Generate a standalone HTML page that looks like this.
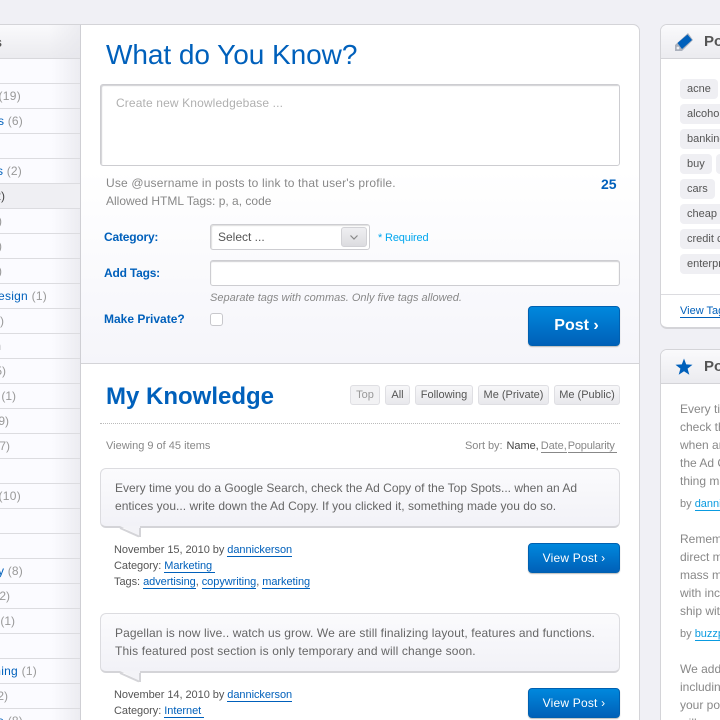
<!DOCTYPE html>
<html><head><meta charset="utf-8"><style>
html,body{margin:0;padding:0;width:720px;height:720px;overflow:hidden;background:#f0f0f5;font-family:"Liberation Sans",sans-serif}
#r{position:relative;width:720px;height:720px;overflow:hidden}
.b{position:absolute;box-sizing:border-box}
.t{position:absolute;white-space:nowrap;font-size:12px;line-height:16px;letter-spacing:0;color:#666}
a,.l{color:#0060bb;text-decoration:none;border-bottom:1px solid #0060bb}
.g{color:#999}.n{color:#0060bb}
.line{position:absolute;left:0;width:80px;height:1px;background:#dcdce0}
.tab{position:absolute;top:385px;height:20px;box-sizing:border-box;border:1px solid #dfdfe3;border-radius:3px;background:linear-gradient(#f7f7f9,#e8e8ec);font-size:11px;line-height:18px;text-align:center;color:#555;letter-spacing:0}
.tag{position:absolute;left:680px;height:20px;background:#efeff3;border-radius:4px;font-size:11px;line-height:21px;padding:0 7px;color:#555;letter-spacing:0;white-space:nowrap}
.bub{position:absolute;left:100px;width:520px;height:60px;box-sizing:border-box;border:1px solid #dcdce0;border-bottom:2px solid #d4d4d8;border-radius:6px;background:linear-gradient(#fbfbfd,#f2f2f7)}
.btn{position:absolute;left:528px;width:92px;box-sizing:border-box;border:1px solid #0060b0;border-radius:4px;background:linear-gradient(#0088dd,#0060b8);color:#fff;text-align:center;box-shadow:0 1px 1px #bbb}
</style></head><body><div id="r">

<!-- left sidebar -->
<div class="b" style="left:0;top:24px;width:81px;height:696px;background:linear-gradient(90deg,#fbfbff 0,#fbfbff 65%,#ecECf1 100%);border-top:1px solid #d4d4d8;border-right:1px solid #cfcfd4"></div>
<div class="b" style="left:0;top:25px;width:80px;height:34px;background:linear-gradient(90deg,rgba(255,255,255,0) 60%,rgba(228,228,234,.6)),linear-gradient(#fafafc,#ebebef);border-bottom:1px solid #d8d8dc"></div>
<div class="b" style="left:0;top:184px;width:80px;height:24px;background:#efeff3"></div>
<div class="line" style="top:83px"></div><div class="line" style="top:108px"></div><div class="line" style="top:133px"></div><div class="line" style="top:158px"></div><div class="line" style="top:183px"></div><div class="line" style="top:208px"></div><div class="line" style="top:233px"></div><div class="line" style="top:258px"></div><div class="line" style="top:283px"></div><div class="line" style="top:308px"></div><div class="line" style="top:333px"></div><div class="line" style="top:358px"></div><div class="line" style="top:383px"></div><div class="line" style="top:408px"></div><div class="line" style="top:433px"></div><div class="line" style="top:458px"></div><div class="line" style="top:483px"></div><div class="line" style="top:508px"></div><div class="line" style="top:533px"></div><div class="line" style="top:558px"></div><div class="line" style="top:583px"></div><div class="line" style="top:608px"></div><div class="line" style="top:633px"></div><div class="line" style="top:658px"></div><div class="line" style="top:683px"></div><div class="line" style="top:708px"></div>
<div class="t" style="right:720px;margin-right:-2px;top:34px;color:#555;font-weight:bold;font-size:14px">s</div>
<div class="t g" style="right:699px;top:88px;letter-spacing:.3px">(19)</div>
<div class="t" style="right:697px;top:113px;letter-spacing:.2px"><span class="n">s</span> <span class="g">(6)</span></div>
<div class="t" style="right:698px;top:163px;letter-spacing:.2px"><span class="n">s</span> <span class="g">(2)</span></div>
<div class="t" style="right:715px;top:188px;color:#444">2)</div>
<div class="t g" style="right:718px;top:213px">)</div>
<div class="t g" style="right:718px;top:238px">)</div>
<div class="t g" style="right:718px;top:263px">)</div>
<div class="t" style="right:673px;top:288px;letter-spacing:.25px"><span class="n">esign</span> <span class="g">(1)</span></div>
<div class="t g" style="right:716px;top:313px">)</div>
<div class="t g" style="right:719px;top:338px">n</div>
<div class="t g" style="right:714px;top:363px">5)</div>
<div class="t g" style="right:704px;top:388px">(1)</div>
<div class="t g" style="right:711px;top:413px">9)</div>
<div class="t g" style="right:710px;top:438px">7)</div>
<div class="t g" style="right:699px;top:488px;letter-spacing:.3px">(10)</div>
<div class="t" style="right:697px;top:563px;letter-spacing:.2px"><span class="n">y</span> <span class="g">(8)</span></div>
<div class="t g" style="right:710px;top:588px">2)</div>
<div class="t g" style="right:705px;top:613px">(1)</div>
<div class="t" style="right:683px;top:663px;letter-spacing:.25px"><span class="n">ning</span> <span class="g">(1)</span></div>
<div class="t g" style="right:712px;top:688px">2)</div>
<div class="t" style="right:697px;top:713px;letter-spacing:.2px"><span class="n">e</span> <span class="g">(8)</span></div>

<!-- main -->
<div class="b" style="left:80px;top:24px;width:560px;height:696px;background:#fff;border:1px solid #d4d4d8;border-bottom:0;border-left:1px solid #cfcfd4;border-radius:0 7px 0 0"></div>
<div class="b" style="left:81px;top:170px;width:558px;height:194px;background:linear-gradient(#fff,#f5f5fa);border-bottom:1px solid #d4d4d8"></div>

<div class="t" style="left:106px;top:38px;font-size:28px;line-height:34px;letter-spacing:-.05px;color:#0060bb">What do You Know?</div>
<div class="b" style="left:100px;top:84px;width:520px;height:82px;border:1px solid #cdcdd1;border-radius:3px;background:#fff;box-shadow:inset 1px 1px 1px #d0d0d4"></div>
<div class="t" style="left:116px;top:95px;color:#b0b0b0;letter-spacing:.13px">Create new Knowledgebase ...</div>
<div class="t" style="left:106px;top:175px;color:#888;letter-spacing:.17px">Use @username in posts to link to that user's profile.</div>
<div class="t" style="left:106px;top:193px;color:#888">Allowed HTML Tags: p, a, code</div>
<div class="t" style="left:601px;top:176px;color:#0060bb;font-weight:bold;font-size:14px;letter-spacing:0">25</div>

<div class="t" style="left:104px;top:229px;color:#0060bb;font-weight:bold;letter-spacing:-.2px">Category:</div>
<div class="t" style="left:104px;top:265px;color:#0060bb;font-weight:bold;letter-spacing:-.2px">Add Tags:</div>
<div class="t" style="left:104px;top:311px;color:#0060bb;font-weight:bold;letter-spacing:0">Make Private?</div>

<div class="b" style="left:210px;top:224px;width:160px;height:26px;border:1px solid #cdcdd1;border-radius:3px;background:#fff;box-shadow:inset 1px 1px 1px #ddd"></div>
<div class="t" style="left:218px;top:229px;color:#555">Select ...</div>
<div class="b" style="left:341px;top:227px;width:26px;height:20px;border:1px solid #d2d2d6;border-radius:3px;background:linear-gradient(#efeff2,#dcdce0)"></div>
<svg class="b" style="left:349px;top:234px" width="10" height="7"><path d="M1.5 1.5 L5 5 L8.5 1.5" fill="none" stroke="#888" stroke-width="1.2"/></svg>
<div class="t" style="left:378px;top:230px;font-size:11px;color:#00a6ee;letter-spacing:-.15px">* Required</div>

<div class="b" style="left:210px;top:260px;width:410px;height:26px;border:1px solid #cdcdd1;border-radius:3px;background:#fff;box-shadow:inset 0 1px 1px #d0d0d4"></div>
<div class="t" style="left:210px;top:290px;font-size:11px;font-style:italic;color:#888">Separate tags with commas. Only five tags allowed.</div>
<div class="b" style="left:210px;top:313px;width:13px;height:13px;border:1px solid #c8c8cc;border-radius:3px;background:#fff"></div>

<div class="btn" style="top:306px;height:40px;padding-left:5px;font-size:16px;font-weight:bold;line-height:37px;letter-spacing:0">Post ›</div>

<div class="t" style="left:106px;top:382px;font-size:24px;line-height:30px;font-weight:bold;letter-spacing:0;color:#0060bb">My Knowledge</div>
<div class="tab" style="left:350px;width:30px;color:#999;background:#f2f2f4">Top</div>
<div class="tab" style="left:385px;width:25px">All</div>
<div class="tab" style="left:415px;width:58px">Following</div>
<div class="tab" style="left:478px;width:71px">Me (Private)</div>
<div class="tab" style="left:554px;width:66px">Me (Public)</div>
<div class="b" style="left:100px;top:423px;width:520px;height:1px;border-top:1px dotted #bbb"></div>
<div class="t" style="left:106px;top:438px;font-size:11px;color:#888">Viewing 9 of 45 items</div>
<div class="t" style="left:465px;top:438px;font-size:11px;color:#888;letter-spacing:-.05px">Sort by: <span style="color:#444;margin-left:1px">Name,</span> <span style="border-bottom:1px solid #888;margin-left:-1px">Date,</span> <span style="border-bottom:1px solid #888;margin-left:-2px;padding-right:2px;letter-spacing:-.2px">Popularity</span></div>

<!-- post 1 -->
<div class="bub" style="top:468px"></div>
<svg class="b" style="left:118px;top:525px" width="24" height="14"><path d="M2 1 H22 V11 Z" fill="#f3f3f7"/><path d="M2 3 L21 11.5" stroke="#d4d4d8" stroke-width="2" fill="none"/><path d="M22 12 V3" stroke="#d4d4d8" stroke-width="2" fill="none"/></svg>
<div class="t" style="left:115px;top:480px">Every time you do a Google Search, check the Ad Copy of the Top Spots... when an Ad</div>
<div class="t" style="left:115px;top:498px;letter-spacing:.03px">entices you... write down the Ad Copy. If you clicked it, something made you do so.</div>
<div class="t" style="left:114px;top:542px;font-size:11px;color:#555;letter-spacing:-.05px">November 15, 2010 by <a>dannickerson</a></div>
<div class="t" style="left:114px;top:558px;font-size:11px;color:#555;letter-spacing:-.05px">Category: <a>Marketing&nbsp;</a></div>
<div class="t" style="left:114px;top:574px;font-size:11px;color:#555;letter-spacing:-.05px">Tags: <a>advertising</a>, <a>copywriting</a>, <a>marketing</a></div>
<div class="btn" style="top:543px;height:30px;font-size:12px;line-height:28px;letter-spacing:.2px">View Post ›</div>

<!-- post 2 -->
<div class="bub" style="top:613px"></div>
<svg class="b" style="left:118px;top:670px" width="24" height="14"><path d="M2 1 H22 V11 Z" fill="#f3f3f7"/><path d="M2 3 L21 11.5" stroke="#d4d4d8" stroke-width="2" fill="none"/><path d="M22 12 V3" stroke="#d4d4d8" stroke-width="2" fill="none"/></svg>
<div class="t" style="left:115px;top:625px;letter-spacing:.1px">Pagellan is now live.. watch us grow. We are still finalizing layout, features and functions.</div>
<div class="t" style="left:115px;top:643px;letter-spacing:.15px">This featured post section is only temporary and will change soon.</div>
<div class="t" style="left:114px;top:687px;font-size:11px;color:#555;letter-spacing:-.05px">November 14, 2010 by <a>dannickerson</a></div>
<div class="t" style="left:114px;top:703px;font-size:11px;color:#555;letter-spacing:-.05px">Category: <a>Internet&nbsp;</a></div>
<div class="btn" style="top:688px;height:30px;font-size:12px;line-height:28px;letter-spacing:.2px">View Post ›</div>

<!-- right panel 1 -->
<div class="b" style="left:660px;top:24px;width:70px;height:305px;background:#fff;border:1px solid #d4d4d8;border-bottom:2px solid #d4d4d8;border-radius:7px"></div>
<div class="b" style="left:661px;top:25px;width:60px;height:34px;background:linear-gradient(#fafafc,#ebebef);border-bottom:1px solid #d4d4d8;border-radius:6px 0 0 0"></div>
<svg class="b" style="left:674px;top:32px" width="20" height="20"><path d="M1 13 L14 1 L19 8 L8 19 L1 19 Z" fill="#aab0bc"/><path d="M3.5 11 L13.5 2.5 L18 8 L8 17 Z" fill="#0060bb"/><circle cx="4" cy="16" r="1.4" fill="#eef0f4"/></svg>
<div class="t" style="left:704px;top:33px;font-size:15px;line-height:18px;font-weight:bold;color:#555;letter-spacing:0">Popular</div>
<div class="tag" style="top:79px">acne</div>
<div class="tag" style="top:104px">alcoholism</div>
<div class="tag" style="top:129px">banking</div>
<div class="tag" style="top:154px">buy</div>
<div class="tag" style="top:154px;left:716px">a</div>
<div class="tag" style="top:179px">cars</div>
<div class="tag" style="top:204px">cheap</div>
<div class="tag" style="top:229px">credit card</div>
<div class="tag" style="top:254px">enterprise</div>
<div class="b" style="left:661px;top:294px;width:60px;height:1px;background:#dcdce0"></div>
<div class="t" style="left:680px;top:303px;font-size:11px;color:#0060bb"><a>View Tags</a></div>

<!-- right panel 2 -->
<div class="b" style="left:660px;top:349px;width:70px;height:380px;background:#fff;border:1px solid #d4d4d8;border-radius:7px"></div>
<div class="b" style="left:661px;top:350px;width:60px;height:34px;background:linear-gradient(#fafafc,#ebebef);border-bottom:1px solid #d4d4d8;border-radius:6px 0 0 0"></div>
<svg class="b" style="left:675px;top:358px" width="18" height="18"><path d="M9 .5 L11.2 6.4 L17.5 6.7 L12.6 10.6 L14.3 16.8 L9 13.3 L3.7 16.8 L5.4 10.6 L.5 6.7 L6.8 6.4 Z" fill="#0060bb"/></svg>
<div class="t" style="left:704px;top:358px;font-size:15px;line-height:18px;font-weight:bold;color:#555;letter-spacing:0">Popular</div>
<div class="t" style="left:680px;top:401px;color:#888">Every time</div>
<div class="t" style="left:680px;top:419px;color:#888">check the</div>
<div class="t" style="left:680px;top:437px;color:#888">when an</div>
<div class="t" style="left:680px;top:455px;color:#888">the Ad Copy</div>
<div class="t" style="left:680px;top:473px;color:#888">thing made</div>
<div class="t" style="left:680px;top:496px;font-size:11px;color:#888">by <a style="color:#0a9be0;border-color:#0a9be0">dannickerson</a></div>
<div class="t" style="left:680px;top:531px;color:#888">Remember</div>
<div class="t" style="left:680px;top:549px;color:#888">direct mail</div>
<div class="t" style="left:680px;top:567px;color:#888">mass mail</div>
<div class="t" style="left:680px;top:585px;color:#888">with income</div>
<div class="t" style="left:680px;top:603px;color:#888">ship with</div>
<div class="t" style="left:680px;top:626px;font-size:11px;color:#888">by <a style="color:#0a9be0;border-color:#0a9be0">buzzpost</a></div>
<div class="t" style="left:680px;top:661px;color:#888">We added</div>
<div class="t" style="left:680px;top:679px;color:#888">including</div>
<div class="t" style="left:680px;top:697px;color:#888">your post</div>
<div class="t" style="left:680px;top:715px;color:#888">will</div>
</div></body></html>
